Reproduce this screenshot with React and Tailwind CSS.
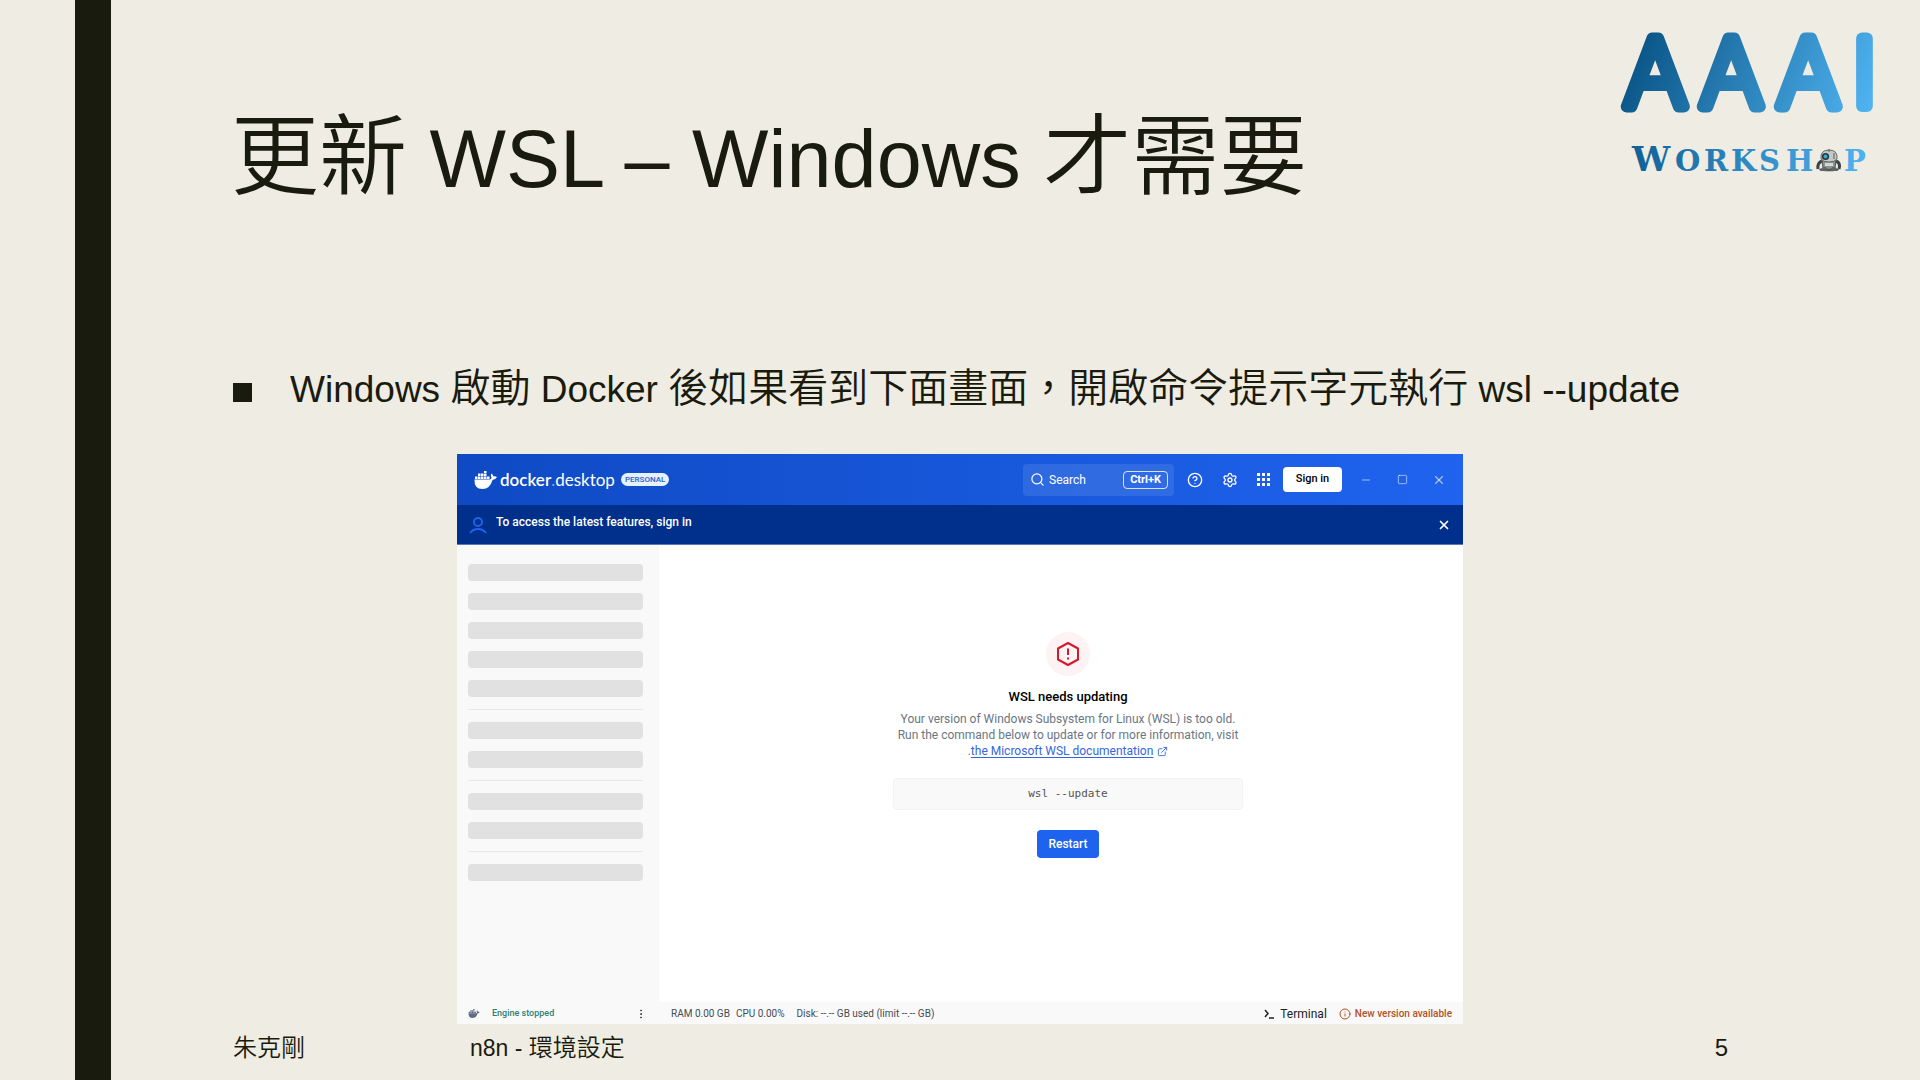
import { Search, CircleHelp, Settings, Minus, Square, X, EllipsisVertical, Info, ExternalLink } from "lucide-react";

const latinFont = "font-['Liberation_Sans','Noto_Sans_CJK_TC',sans-serif]";

function Whale({ className }) {
  return (
    <svg viewBox="0 0 46 36" className={className} fill="currentColor" aria-hidden="true">
      <path d="M1 17H31Q35 17 35 13Q32 8 35 5Q38 7 39 11Q43 10 46 12Q43 17 37 18Q32 36 17 36Q0 36 1 17Z" />
      <path d="M2 11H7V16H2ZM8 11H13V16H8ZM14 11H19V16H14ZM20 11H25V16H20ZM26 11H31V16H26ZM8 5H13V10H8ZM14 5H19V10H14ZM20 5H25V10H20ZM20 0H25V4H20Z" />
    </svg>
  );
}

function Robot() {
  return (
    <g transform="translate(200 138)">
      <ellipse cx="12" cy="20.5" rx="10" ry="1.8" fill="#55554f" />
      <path d="M5 12Q0 14 1 20M19 12Q24 14 22 20" stroke="#3c4245" strokeWidth="3" fill="none" />
      <path d="M5 11H19L18 19Q12 22 6 19Z" fill="#8b9290" stroke="#4b5254" strokeWidth="1" />
      <path d="M8 14H16V17H8Z" fill="#d5d8d2" />
      <path d="M4 10Q3 1 12 1Q21 1 20 10Q18 13 12 13Q6 13 4 10Z" fill="#c3c8c4" stroke="#646b6c" strokeWidth="1" />
      <path d="M12 0V3M17 4V10" stroke="#596164" />
      <circle cx="8.5" cy="7.5" r="3.6" fill="#24343d" />
      <circle cx="8.5" cy="7.5" r="2" fill="#3aa7d8" />
      <path d="M6 18L3 22H10L9 18ZM15 18L14 22H21L18 18Z" fill="#5e6666" />
    </g>
  );
}

function WorkshopLogo() {
  return (
    <svg width="260" height="170" viewBox="0 0 260 170" role="img" aria-label="AAAI Workshop" className="shrink-0 overflow-visible">
      <defs>
        <linearGradient id="brand" gradientUnits="userSpaceOnUse" x1="20" y1="40" x2="240" y2="130">
          <stop offset="0" stopColor="#0b5688" />
          <stop offset="1" stopColor="#4fb3f0" />
        </linearGradient>
        <linearGradient id="word" gradientUnits="userSpaceOnUse" x1="10" y1="0" x2="250" y2="0">
          <stop offset="0" stopColor="#0f5f95" />
          <stop offset="1" stopColor="#4fb3f0" />
        </linearGradient>
      </defs>
      <text x="7 83 160 234" y="95" fontSize="92" fill="url(#brand)" stroke="url(#brand)" strokeWidth="12" strokeLinejoin="round" className="font-['DejaVu_Sans',sans-serif] font-extralight">AAAI</text>
      <g fill="url(#word)" className="font-['DejaVu_Serif',serif] font-bold">
        <text x="15" y="160" fontSize="34">W</text>
        <text x="58 87 114 142 169" y="160" fontSize="29">ORKSH</text>
        <text x="227" y="160" fontSize="29">P</text>
      </g>
      <Robot />
    </svg>
  );
}

function AppsGrid() {
  return (
    <svg width="13" height="13" viewBox="0 0 13 13" fill="currentColor" aria-hidden="true">
      <path d="M0 0h3v3H0zM5 0h3v3H5zM10 0h3v3h-3zM0 5h3v3H0zM5 5h3v3H5zM10 5h3v3h-3zM0 10h3v3H0zM5 10h3v3H5zM10 10h3v3h-3z" />
    </svg>
  );
}

function TitleBar() {
  return (
    <div className="flex h-[51px] items-center bg-gradient-to-r from-[#0f4ac4] to-[#1f63ee] pr-[17px] pl-[17px] text-white">
      <Whale className="h-[18px] w-[23px]" />
      <div className="ml-[3px] flex font-['Lato',sans-serif] text-[17px] leading-6">
        <span className="font-semibold">docker</span>
        <span className="text-[#7fa8f5]">.</span>
        <span>desktop</span>
      </div>
      <span className="ml-[6px] rounded-full bg-[#e5f2fc] px-1 text-[8px] leading-[13px] font-medium text-[#2560c8]">PERSONAL</span>
      <label className="ml-auto flex h-8 w-[151px] items-center rounded-sm bg-white/10 pr-[6px] pl-[7px]">
        <Search size={15} strokeWidth={2} className="shrink-0" />
        <input aria-label="Search" placeholder="Search" className="ml-1 w-0 min-w-0 flex-1 bg-transparent text-[12px] text-white outline-none placeholder:text-white" />
        <kbd className="rounded-sm border border-white/80 px-[6px] font-['Roboto',sans-serif] text-[11px] leading-4 font-bold">Ctrl+K</kbd>
      </label>
      <button aria-label="Help" className="ml-[13px]"><CircleHelp size={16} /></button>
      <button aria-label="Settings" className="ml-[19px]"><Settings size={16} /></button>
      <button aria-label="Apps" className="ml-[19px]"><AppsGrid /></button>
      <button className="ml-[13px] h-[25px] w-[59px] rounded-sm bg-white text-[11px] font-medium text-black">Sign in</button>
      <button aria-label="Minimize" className="ml-[18px] text-white/60"><Minus size={12} strokeWidth={2} /></button>
      <button aria-label="Maximize" className="ml-[25px] text-white/60"><Square size={11} strokeWidth={2} /></button>
      <button aria-label="Close" className="ml-[24px] text-white/60"><X size={14} strokeWidth={2} /></button>
    </div>
  );
}

function Banner() {
  return (
    <div className="flex h-10 items-center border-b border-[#5c78b8] bg-[#002f8c] pr-[12px] pl-[12px] text-white">
      <svg width="18" height="18" viewBox="0 0 18 18" fill="none" stroke="#1d63ed" strokeWidth="2" aria-hidden="true">
        <circle cx="9" cy="6" r="4" />
        <path d="M1 17Q4 13 9 13T17 17" />
      </svg>
      <p className="mb-[6px] ml-[9px] text-[12px] leading-4 font-medium">To access the latest features, sign in</p>
      <button aria-label="Dismiss" className="ml-auto"><X size={14} strokeWidth={3} /></button>
    </div>
  );
}

const skeletonGroups = [5, 2, 2, 1];

function Sidebar() {
  return (
    <aside className="flex w-[202px] flex-col bg-[#f9f9f9]">
      <div className="flex flex-1 flex-col gap-3 pt-[19px] pr-4 pl-[11px]">
        {skeletonGroups.map((count, group) => (
          <div key={group} className="flex flex-col gap-3">
            {group > 0 && <hr className="border-[#e7e7e7]" />}
            {Array.from({ length: count }, (_, i) => (
              <div key={i} className="h-[17px] rounded-sm bg-[#e1e1e1]" />
            ))}
          </div>
        ))}
      </div>
      <div className="flex h-[22px] items-center pt-px pr-[12px] pl-[11px] text-[9px]">
        <Whale className="h-[9px] w-[12px] text-[#5d6b83]" />
        <span className="ml-[12px] font-medium text-[#2e7f74]">Engine stopped</span>
        <button aria-label="Engine menu" className="ml-auto text-[#333]"><EllipsisVertical size={12} strokeWidth={2} /></button>
      </div>
    </aside>
  );
}

function WslNotice() {
  return (
    <div className="flex flex-1 flex-col items-center bg-white pt-[87px] pl-[14px] text-center">
      <div className="flex size-11 items-center justify-center rounded-full bg-[#fdf3f5]">
        <svg width="24" height="24" viewBox="0 0 24 24" fill="none" stroke="#d7182a" strokeWidth="2" strokeLinejoin="round" aria-hidden="true">
          <path d="M12 1L22 6.5V17.500L12 23L2 17.500V6.500ZM12 6.500V13M12 15.500V17.500" />
        </svg>
      </div>
      <h2 className="mt-3 text-[13px] leading-[18px] font-medium text-black">WSL needs updating</h2>
      <p className="mt-[5px] text-[12px] leading-4 text-[#6b7684]">
        Your version of Windows Subsystem for Linux (WSL) is too old.
        <br />
        Run the command below to update or for more information, visit
        <br />
        .<a href="#wsl-docs" className="text-[#3565df] underline underline-offset-2">the Microsoft WSL documentation</a>
        <ExternalLink size={11} className="ml-1 inline text-[#3565df]" aria-hidden="true" />
      </p>
      <code className="mt-[19px] block w-[350px] rounded-sm border border-[#f3f3f3] bg-[#f9f9f9] font-['DejaVu_Sans_Mono',monospace] text-[11px] leading-[30px] text-[#555]">wsl --update</code>
      <button className="mt-5 h-7 w-[62px] rounded-sm bg-[#1d63ed] text-[12px] font-medium text-white">Restart</button>
    </div>
  );
}

function StatusBar() {
  return (
    <div className="flex h-[22px] items-center bg-[#f9f9f9] pt-px pr-[11px] pl-3 text-[10px] text-[#444c55]">
      <span>RAM 0.00 GB</span>
      <span className="ml-[6px]">CPU 0.00%</span>
      <span className="ml-3">Disk: --.-- GB used (limit --.-- GB)</span>
      <button className="ml-auto flex items-center gap-[6px] text-[12px] text-[#222]">
        <svg width="10" height="10" viewBox="0 0 10 10" fill="none" stroke="currentColor" strokeWidth="1.500" aria-hidden="true">
          <path d="M1 1L4 4.500L1 8M5 9H10" />
        </svg>
        Terminal
      </button>
      <button className="ml-3 flex items-center gap-1 font-medium text-[#b3521f]">
        <Info size={12} />
        New version available
      </button>
    </div>
  );
}

function DockerWindow() {
  return (
    <section aria-label="Docker Desktop" className="mr-[457px] ml-[346px] flex flex-1 flex-col bg-white font-['Roboto',sans-serif]">
      <TitleBar />
      <Banner />
      <div className="flex flex-1">
        <Sidebar />
        <div className="flex flex-1 flex-col">
          <WslNotice />
          <StatusBar />
        </div>
      </div>
    </section>
  );
}

export default function App() {
  return (
    <div className={`flex min-h-screen bg-[#efece3] text-[#191b0e] ${latinFont}`}>
      <div className="ml-[75px] w-9 shrink-0 bg-[#191b0e]" />
      <main className="flex flex-1 flex-col">
        <header className="flex items-start justify-between pt-[11px] pr-[43px] pl-[120px]">
          <h1 className="mt-[86px] text-[88px] leading-[120px] font-[350]">
            更新<span className="text-[81px]"> WSL – Windows </span>才需要
          </h1>
          <WorkshopLogo />
        </header>
        <ul className="mt-[142px] mb-[37px] pl-[122px]">
          <li className="flex items-center text-[40px] leading-[55px] font-[350]">
            <span className="mt-[6px] mr-[38px] size-[19px] bg-[#191b0e]" />
            <p>
              <span className="text-[37px]">Windows </span>啟動<span className="text-[37px]"> Docker </span>
              後如果看到下面畫面，開啟命令提示字元執行<span className="text-[37px]"> wsl --update</span>
            </p>
          </li>
        </ul>
        <DockerWindow />
        <footer className="flex h-14 items-start pt-[6px] pr-[192px] pl-[122px] text-[24px] leading-9 font-[350]">
          <span className="w-[237px]">朱克剛</span>
          <span><span className="text-[23px]">n8n - </span>環境設定</span>
          <span className="ml-auto">5</span>
        </footer>
      </main>
    </div>
  );
}
